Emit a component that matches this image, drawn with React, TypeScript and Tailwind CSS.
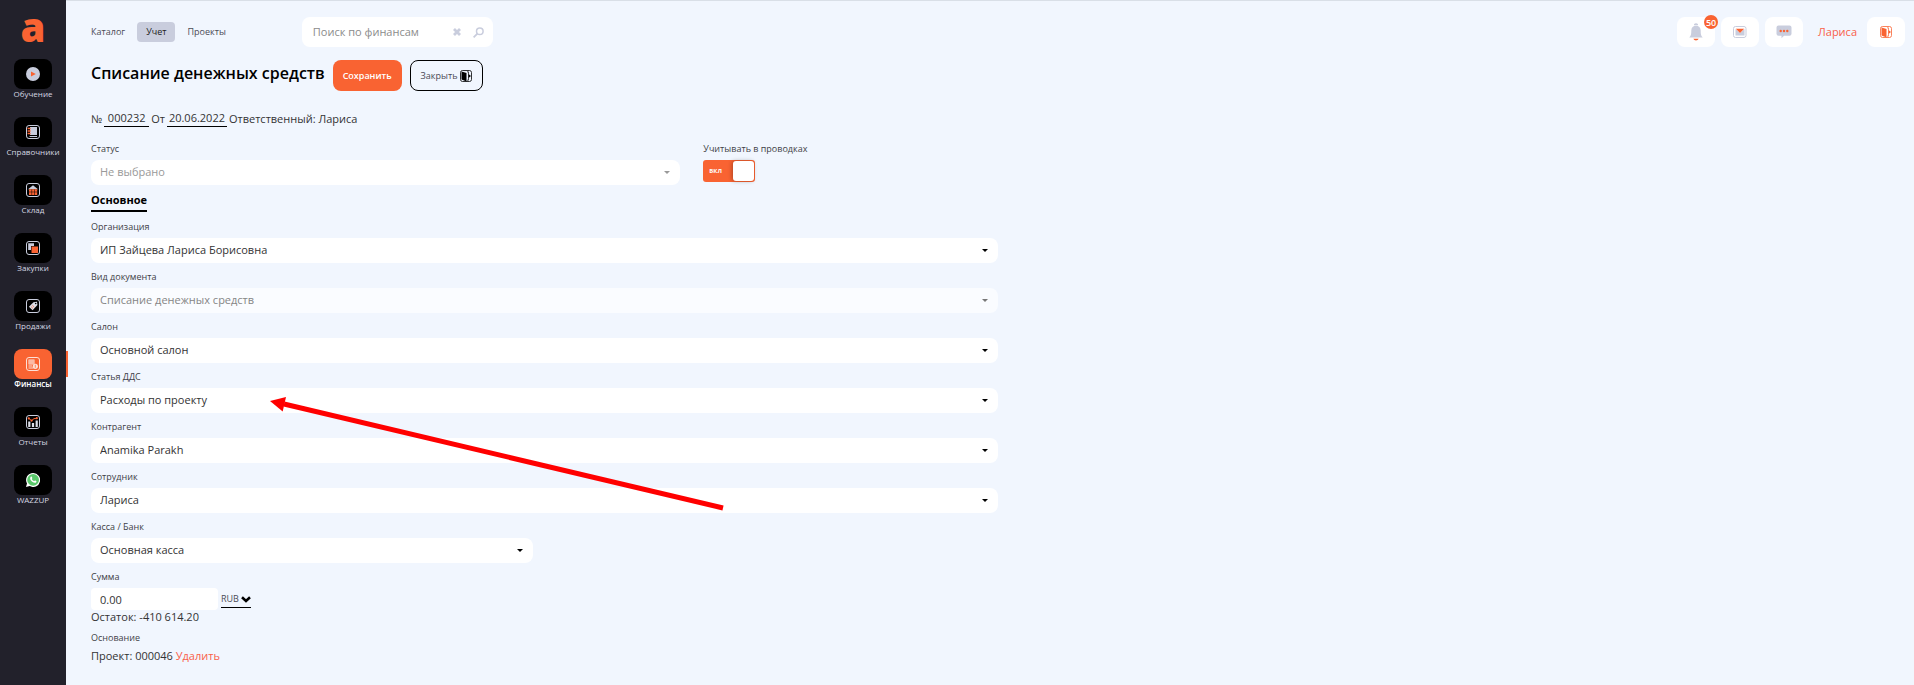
import type { ReactNode } from "react";

type NavItem = {
  label: string;
  icon: ReactNode;
  active?: boolean;
};

type SelectFieldProps = {
  id: string;
  label: string;
  value: string;
  disabled?: boolean;
  muted?: boolean;
};

const Frame = ({ stroke = "#c9cddd" }: { stroke?: string }) => (
  <rect x="0.5" y="0.5" width="13" height="13" rx="2.5" fill="none" stroke={stroke} />
);

const navItems: NavItem[] = [
  {
    label: "Обучение",
    icon: (
      <>
        <circle cx="7" cy="7" r="7" fill="#c9cddd" />
        <path d="M5 4.4 9.8 7 5 9.6Z" fill="#f96332" />
      </>
    ),
  },
  {
    label: "Справочники",
    icon: (
      <>
        <Frame />
        <path d="M4 2h7v8H4Z" fill="#c9cddd" />
        <path d="M3.5 11.5H11" stroke="#c9cddd" />
        <path d="M1.6 3.5h3M1.6 6h3M1.6 8.5h3" stroke="#f96332" strokeWidth="1.4" />
      </>
    ),
  },
  {
    label: "Склад",
    icon: (
      <>
        <Frame />
        <path d="M2 6.2 7 2.2l5 4Z" fill="#c9cddd" />
        <path d="M3 6.2h8.2V12H3Z" fill="#f96332" />
        <path d="M3 9h8.2M5.7 6.5V12M8.5 6.5V12" stroke="#000" strokeWidth="0.5" />
      </>
    ),
  },
  {
    label: "Закупки",
    icon: (
      <>
        <Frame />
        <path d="M2.2 2.2H8V5H5v4H2.2Z" fill="#c9cddd" />
        <path d="M5.5 5.5H12V12H5.5Z" fill="#f96332" />
      </>
    ),
  },
  {
    label: "Продажи",
    icon: (
      <>
        <Frame />
        <path d="M7.5 3.2 11 2.7l.4 3.4-4.8 5.1-3.7-3.5Z" fill="#dcdfe9" />
        <circle cx="9.7" cy="4.5" r="0.8" fill="#000" />
        <path d="m5 7.6 2 1.9M6.3 6.2l2 1.9" stroke="#f96332" strokeWidth="0.7" />
      </>
    ),
  },
  {
    label: "Финансы",
    active: true,
    icon: (
      <>
        <Frame stroke="#fde0d6" />
        <path d="M2.5 2.5h6v5h-6Z" fill="#fde0d6" />
        <path d="M3 4h5M3 6h5" stroke="#f96332" strokeWidth="0.6" />
        <path d="M2.5 9H6M2.5 11h5" stroke="#fde0d6" />
        <circle cx="9.3" cy="9.3" r="2.6" fill="#fde0d6" />
        <path d="M9.3 7.8v3" stroke="#f96332" strokeWidth="0.7" />
      </>
    ),
  },
  {
    label: "Отчеты",
    icon: (
      <>
        <Frame />
        <path d="M3.3 12V6.5M7 12V8M10.7 12V5.5" stroke="#dcdfe9" strokeWidth="2.2" />
        <path d="m2.8 3.4 2.8 2.3L8 3.6h3" fill="none" stroke="#f96332" />
        <circle cx="2.8" cy="3.4" r="1.1" fill="#f96332" />
        <circle cx="5.6" cy="5.6" r="1.1" fill="#f96332" />
        <circle cx="10.8" cy="3.2" r="1.1" fill="#f96332" />
      </>
    ),
  },
  {
    label: "WAZZUP",
    icon: (
      <>
        <path d="M7 0a7 7 0 1 1-3.3 13.1L0 14l1-3.5A7 7 0 0 1 7 0Z" fill="#fff" />
        <circle cx="7.1" cy="6.9" r="5.9" fill="#5bc96c" />
        <path
          d="M4.7 3.7c.7-.6 1.1-.2 1.6 1.2.1.4-.4.7-.5 1 .5 1.1 1.2 1.8 2.3 2.2.4-.1.6-.8 1-.7 1.3.5 1.6.8 1.3 1.5-.8 1.3-2.3 1.1-4.2-.2C4.3 7.3 3.5 5 4.7 3.7Z"
          fill="#fff"
        />
      </>
    ),
  },
];

const mainFields: SelectFieldProps[] = [
  { id: "organization", label: "Организация", value: "ИП Зайцева Лариса Борисовна" },
  { id: "doc-type", label: "Вид документа", value: "Списание денежных средств", disabled: true },
  { id: "salon", label: "Салон", value: "Основной салон" },
  { id: "dds", label: "Статья ДДС", value: "Расходы по проекту" },
  { id: "contractor", label: "Контрагент", value: "Anamika Parakh" },
  { id: "employee", label: "Сотрудник", value: "Лариса" },
];

const labelClass = "block h-[18px] text-[9px] leading-[14px] text-[#3f3f46]";

function ExitIcon({ color }: { color: string }) {
  return (
    <svg width="12" height="12" viewBox="0 0 12 12" aria-hidden="true">
      <rect x="0.5" y="0.5" width="11" height="11" rx="2" fill="none" stroke={color} strokeWidth="0.8" />
      <path d="M1.5 1.5 6.5 3v8.5l-5-2Z" fill={color} />
      <path d="M7 1.8h1.5v8.4H7" fill="none" stroke={color} strokeWidth="0.7" />
      <path d="M8.5 4 11 6 8.5 8Z" fill={color} />
    </svg>
  );
}

function SelectField({ id, label, value, disabled, muted }: SelectFieldProps) {
  return (
    <div>
      <label htmlFor={id} className={labelClass}>
        {label}
      </label>
      <div className="relative">
        <select
          id={id}
          disabled={disabled}
          className={`block h-[25px] w-full appearance-none rounded-lg pr-6 pl-[9px] text-[11px] ${
            disabled ? "bg-[#fafcff] text-[#858585]" : "bg-white"
          } ${muted ? "text-[#999]" : disabled ? "" : "text-[#333]"}`}
        >
          <option>{value}</option>
        </select>
        <svg
          className={`pointer-events-none absolute top-[11px] right-[10px] ${
            muted ? "text-[#999]" : disabled ? "text-[#777]" : "text-black"
          }`}
          width="6"
          height="3"
          viewBox="0 0 6 3"
          aria-hidden="true"
        >
          <path d="M0 0h6L3 3Z" fill="currentColor" />
        </svg>
      </div>
    </div>
  );
}

function Sidebar() {
  return (
    <aside className="w-[66px] shrink-0 bg-[#22212b]">
      <a
        href="#home"
        className="flex h-[59px] items-start justify-center text-[40px] leading-[54px] font-extrabold text-[#f96332]"
      >
        a
      </a>
      <nav className="flex flex-col gap-[18px]">
        {navItems.map((item) => (
          <a
            key={item.label}
            href="#section"
            className={`relative flex flex-col items-center text-[8px] leading-[10px] ${
              item.active ? "font-semibold text-white" : "text-[#d5d7e2]"
            }`}
          >
            <span
              className={`flex h-[30px] w-[38px] items-center justify-center rounded-lg ${
                item.active ? "bg-[#f96332]" : "bg-black"
              }`}
            >
              <svg width="14" height="14" viewBox="0 0 14 14" aria-hidden="true">
                {item.icon}
              </svg>
            </span>
            {item.label}
            {item.active && (
              <span className="absolute top-[2px] -right-[2px] h-[26px] w-[2px] bg-[#f96332]" />
            )}
          </a>
        ))}
      </nav>
    </aside>
  );
}

function TopBar() {
  const tile = "relative flex h-[30px] w-[38px] items-center justify-center rounded-lg bg-white";

  return (
    <header className="flex items-center">
      <nav className="flex items-center text-[9px] leading-5 text-[#4b4b55]">
        <a href="#catalog">Каталог</a>
        <a href="#accounting" className="mx-3 rounded bg-[#c9cddd] px-[9px] text-[#222]">
          Учет
        </a>
        <a href="#projects">Проекты</a>
      </nav>

      <form className="ml-[76px] flex h-[30px] w-[191px] items-center rounded-lg bg-white pr-[9px] pl-[11px]">
        <input
          type="text"
          aria-label="Поиск по финансам"
          placeholder="Поиск по финансам"
          className="min-w-0 flex-1 text-[11px] outline-none placeholder:text-[#8b8b8b]"
        />
        <button type="reset" aria-label="Очистить" className="mr-3">
          <svg width="8" height="8" viewBox="0 0 8 8" aria-hidden="true">
            <path d="m1 1 6 6M7 1 1 7" stroke="#c9cddd" strokeWidth="2.8" />
          </svg>
        </button>
        <button type="submit" aria-label="Найти">
          <svg width="11" height="11" viewBox="0 0 11 11" aria-hidden="true">
            <circle cx="6.8" cy="4.2" r="3.3" fill="none" stroke="#c9cddd" strokeWidth="1.5" />
            <path d="M4.4 6.6.6 10.4" stroke="#c9cddd" strokeWidth="1.8" />
          </svg>
        </button>
      </form>

      <div className="ml-auto flex items-center gap-[6px]">
        <button type="button" aria-label="Уведомления" className={tile}>
          <svg width="14" height="18" viewBox="0 0 14 18" aria-hidden="true">
            <path d="M5 1.2a2.6 2.6 0 0 1 4 0v1H5Z" fill="#c9cddd" />
            <path d="M2.3 7.5c0-3 2-4.7 4.7-4.7s4.7 1.7 4.7 4.7c0 4 .3 5.3 2 7H.3c1.7-1.7 2-3 2-7Z" fill="#c9cddd" />
            <path d="M4.3 15.8h5.4a3 3 0 0 1-5.4 0Z" fill="#f96332" />
          </svg>
          <span className="absolute -top-[2px] -right-[3px] flex size-[14px] items-center justify-center rounded-full bg-[#f96332] text-[9px] leading-none font-semibold text-white">
            50
          </span>
        </button>
        <button type="button" aria-label="Почта" className={tile}>
          <svg width="14" height="12" viewBox="0 0 14 12" aria-hidden="true">
            <rect x="0.5" y="0.5" width="12.5" height="11" rx="2" fill="none" stroke="#c9cddd" />
            <path d="M2.5 3v6.5h9V3L7 7Z" fill="#c9cddd" />
            <path d="M2.8 2.8h8.4L7 7Z" fill="#f96332" />
          </svg>
        </button>
        <button type="button" aria-label="Сообщения" className={tile}>
          <svg width="16" height="14" viewBox="0 0 16 14" aria-hidden="true">
            <path d="M2.5.5h11a2 2 0 0 1 2 2v6.3a2 2 0 0 1-2 2H8l-2.5 2.5v-2.5h-3a2 2 0 0 1-2-2V2.5a2 2 0 0 1 2-2Z" fill="#c9cddd" />
            <circle cx="4.7" cy="6" r="1.2" fill="#f96332" />
            <circle cx="8" cy="6" r="1.2" fill="#f96332" />
            <circle cx="11.3" cy="6" r="1.2" fill="#f96332" />
          </svg>
        </button>
        <a href="#profile" className="pr-1 pl-[9px] text-[11px] text-[#f9604a]">
          Лариса
        </a>
        <button type="button" aria-label="Выйти" className={tile}>
          <ExitIcon color="#f96332" />
        </button>
      </div>
    </header>
  );
}

export default function App() {
  return (
    <div className="flex min-h-screen bg-[#f1f6fe] font-['Open_Sans','Noto_Sans',sans-serif] text-[#333]">
      <Sidebar />

      <div className="relative min-w-0 flex-1 border-t border-[#d9dfe7] pt-4 pr-[9px] pl-[25px]">
        <TopBar />

        <div className="mt-[13px] flex items-center">
          <h1 className="mr-2 pb-[6px] text-base font-semibold text-black">Списание денежных средств</h1>
          <button
            type="button"
            className="mr-2 h-[31px] rounded-lg bg-[#f96332] px-[10px] text-[9px] font-semibold text-white"
          >
            Сохранить
          </button>
          <button
            type="button"
            className="flex h-[31px] items-center gap-[3px] rounded-lg border border-black px-[10px] text-[9px] text-[#4b4b55]"
          >
            Закрыть
            <ExitIcon color="#000" />
          </button>
        </div>

        <div className="mt-[19px] flex items-center text-[11px] leading-4">
          <label htmlFor="doc-number">№</label>
          <input
            id="doc-number"
            defaultValue="000232"
            className="mx-[2px] w-[45px] border-b border-black text-center outline-none"
          />
          <label htmlFor="doc-date">От</label>
          <input
            id="doc-date"
            defaultValue="20.06.2022"
            className="mx-[2px] w-[60px] border-b border-black text-center outline-none"
          />
          <span>Ответственный: Лариса</span>
        </div>

        <div className="mt-[15px] grid grid-cols-3 gap-[23px]">
          <SelectField id="status" label="Статус" value="Не выбрано" muted />
          <div>
            <label htmlFor="postings" className={labelClass}>
              Учитывать в проводках
            </label>
            <div className="relative flex h-[22px] w-[52px] items-center justify-between rounded-[3px] bg-[#f96332] p-px pl-[6px]">
              <input
                id="postings"
                type="checkbox"
                defaultChecked
                className="absolute inset-0 size-full cursor-pointer opacity-0"
              />
              <span className="text-[6px] leading-none font-bold text-white">ВКЛ</span>
              <span className="pointer-events-none h-5 w-[21px] rounded-[3px] bg-white shadow-[-1px_0_4px_rgba(0,0,0,0.3)]" />
            </div>
          </div>
        </div>

        <h2 className="mt-[7px] w-fit border-b-2 border-black pb-[2px] text-[11px] leading-4 font-bold text-black">
          Основное
        </h2>

        <div className="mt-2 flex w-1/2 flex-col gap-[7px]">
          {mainFields.map((field) => (
            <SelectField key={field.id} {...field} />
          ))}
          <div className="grid grid-cols-2 gap-[23px]">
            <SelectField id="cash" label="Касса / Банк" value="Основная касса" />
          </div>
          <div>
            <label htmlFor="amount" className={labelClass}>
              Сумма
            </label>
            <div className="flex items-center gap-[3px]">
              <input
                id="amount"
                defaultValue="0.00"
                className="h-[22px] w-[127px] rounded bg-white px-[9px] text-[11px] outline-none"
              />
              <div className="relative w-[30px] border-b border-black text-[9px]">
                <select aria-label="Валюта" className="block w-full appearance-none leading-4 text-[#4b4b55]">
                  <option>RUB</option>
                </select>
                <svg
                  className="pointer-events-none absolute top-[5px] right-0"
                  width="10"
                  height="7"
                  viewBox="0 0 10 7"
                  aria-hidden="true"
                >
                  <path d="m1 1.3 4 3.7 4-3.7" fill="none" stroke="#000" strokeWidth="2.6" />
                </svg>
              </div>
            </div>
            <p className="text-[11px] leading-[14px]">Остаток: -410 614.20</p>
          </div>
        </div>

        <div className="mt-[6px]">
          <h3 className="text-[9px] leading-4 text-[#3f3f46]">Основание</h3>
          <p className="mt-[2px] text-[11px] leading-4">
            Проект: 000046{" "}
            <a href="#remove" className="text-[#f9604a]">
              Удалить
            </a>
          </p>
        </div>

        {/* Pointer to the expense category */}
        <svg
          className="pointer-events-none absolute top-[395px] left-[204px]"
          width="454"
          height="116"
          viewBox="0 0 454 116"
          aria-hidden="true"
        >
          <path d="M14 8 453 112" stroke="#f00" strokeWidth="5" fill="none" />
          <path d="M0 5 16 1l-3.300 14.500Z" fill="#f00" />
        </svg>
      </div>
    </div>
  );
}
